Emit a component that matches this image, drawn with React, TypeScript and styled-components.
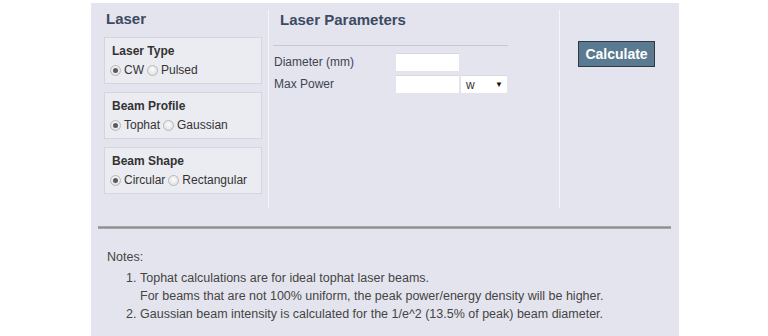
import styled, { createGlobalStyle } from "styled-components";

const GlobalStyle = createGlobalStyle`
  html, body {
    margin: 0;
    padding: 0;
    background: #ffffff;
    font-family: "Liberation Sans", Arial, sans-serif;
    overflow: hidden;
  }
`;

const Panel = styled.div`
  margin: 3px 0 0 91px;
  width: 588px;
  height: 340px;
  background: #e4e4ee;
`;

const TopRow = styled.div`
  display: flex;
  padding-top: 7px;
  height: 198px;
`;

const LeftCol = styled.div`
  width: 164px;
  padding-left: 13px;
  display: flex;
  flex-direction: column;
`;

const MiddleCol = styled.div`
  width: 290px;
  border-left: 1px solid #f6f6fa;
  border-right: 1px solid #f6f6fa;
  display: flex;
  flex-direction: column;
`;

const RightCol = styled.div`
  flex: 1;
  padding: 31px 0 0 18px;
`;

const Heading = styled.h2<{ $indent?: number }>`
  margin: 1px 0 10px ${(p) => p.$indent ?? 2}px;
  font-size: 15px;
  line-height: 16px;
  font-weight: bold;
  color: #3c4a62;
`;

const BoxList = styled.div`
  display: flex;
  flex-direction: column;
  gap: 8px;
`;

const OptionBox = styled.div`
  width: 158px;
  height: 47px;
  border: 1px solid #d5d5df;
  background: #ebebf2;
  padding: 6px 0 0 4px;
  box-sizing: border-box;
`;

const BoxTitle = styled.div`
  margin-left: 3px;
  font-size: 12px;
  line-height: 14px;
  font-weight: bold;
  color: #333333;
`;

const RadioRow = styled.div`
  display: flex;
  align-items: center;
  gap: 2px;
  margin-top: 4px;
  height: 16px;
  font-size: 12px;
  color: #333333;
`;

const RadioLabel = styled.label`
  display: flex;
  align-items: center;
  gap: 3px;
`;

const Radio = styled.input.attrs({ type: "radio" })`
  appearance: none;
  margin: 0 0 0 1px;
  width: 11px;
  height: 11px;
  border-radius: 50%;
  border: 1px solid #b7b7bc;
  background: radial-gradient(circle at 50% 40%, #fbfbfb, #dcdcdf);
  box-sizing: border-box;
  position: relative;

  &:checked::after {
    content: "";
    position: absolute;
    left: 2px;
    top: 2px;
    width: 5px;
    height: 5px;
    border-radius: 50%;
    background: #5a5a5e;
  }
`;

const ParamTable = styled.div`
  margin: 17px 0 0 4px;
  width: 235px;
  border-top: 1px solid #c8c8d2;
  padding-top: 7px;
  display: flex;
  flex-direction: column;
  gap: 4px;
`;

const ParamRow = styled.div`
  display: flex;
  align-items: center;
  height: 18px;
`;

const ParamLabel = styled.span`
  width: 122px;
  padding-left: 1px;
  font-size: 12px;
  color: #3f4450;
`;

const TextBox = styled.div`
  width: 63px;
  height: 18px;
  background: #ffffff;
  border-top: 1px solid #d8d8de;
  box-sizing: border-box;
`;

const Select = styled.div`
  margin-left: 2px;
  width: 46px;
  height: 18px;
  background: #ffffff;
  border-top: 1px solid #d8d8de;
  box-sizing: border-box;
  display: flex;
  align-items: center;
  justify-content: space-between;
  padding: 0 4px 0 5px;
  font-size: 12px;
  color: #333333;
`;

const Arrow = styled.span`
  font-size: 8px;
  color: #111111;
`;

const CalcButton = styled.button`
  width: 77px;
  height: 26px;
  background: #5a7a92;
  border: 1px solid #2f3a44;
  color: #ffffff;
  font-family: "Liberation Sans", Arial, sans-serif;
  font-size: 14px;
  font-weight: bold;
  padding: 0;
  cursor: pointer;
`;

const Rule = styled.div`
  margin: 18px 0 0 7px;
  width: 573px;
  height: 3px;
  background: linear-gradient(#b4b4b8, #8e8e92 50%, #b4b4b8);
`;

const Notes = styled.div`
  margin: 19px 0 0 16px;
  font-size: 12.5px;
  line-height: 18px;
  color: #444444;
`;

const NoteList = styled.ol`
  margin: 3px 0 0 16px;
  padding-left: 33px;
  font-size: 12.5px;
  line-height: 18px;
  color: #444444;
`;

const groups = [
  { title: "Laser Type", options: ["CW", "Pulsed"] },
  { title: "Beam Profile", options: ["Tophat", "Gaussian"] },
  { title: "Beam Shape", options: ["Circular", "Rectangular"] },
];

export default function App() {
  return (
    <>
      <GlobalStyle />
      <Panel>
        <TopRow>
          <LeftCol>
            <Heading>Laser</Heading>
            <BoxList>
              {groups.map((g) => (
                <OptionBox key={g.title}>
                  <BoxTitle>{g.title}</BoxTitle>
                  <RadioRow>
                    {g.options.map((o, i) => (
                      <RadioLabel key={o}>
                        <Radio name={g.title} defaultChecked={i === 0} />
                        {o}
                      </RadioLabel>
                    ))}
                  </RadioRow>
                </OptionBox>
              ))}
            </BoxList>
          </LeftCol>
          <MiddleCol>
            <Heading $indent={11} style={{ marginBottom: 0, marginTop: 2 }}>
              Laser Parameters
            </Heading>
            <ParamTable>
              <ParamRow>
                <ParamLabel>Diameter (mm)</ParamLabel>
                <TextBox />
              </ParamRow>
              <ParamRow>
                <ParamLabel>Max Power</ParamLabel>
                <TextBox />
                <Select>
                  w<Arrow>▼</Arrow>
                </Select>
              </ParamRow>
            </ParamTable>
          </MiddleCol>
          <RightCol>
            <CalcButton>Calculate</CalcButton>
          </RightCol>
        </TopRow>
        <Rule />
        <Notes>Notes:</Notes>
        <NoteList>
          <li>
            Tophat calculations are for ideal tophat laser beams.
            <br />
            For beams that are not 100% uniform, the peak power/energy density will be higher.
          </li>
          <li>Gaussian beam intensity is calculated for the 1/e^2 (13.5% of peak) beam diameter.</li>
        </NoteList>
      </Panel>
    </>
  );
}
